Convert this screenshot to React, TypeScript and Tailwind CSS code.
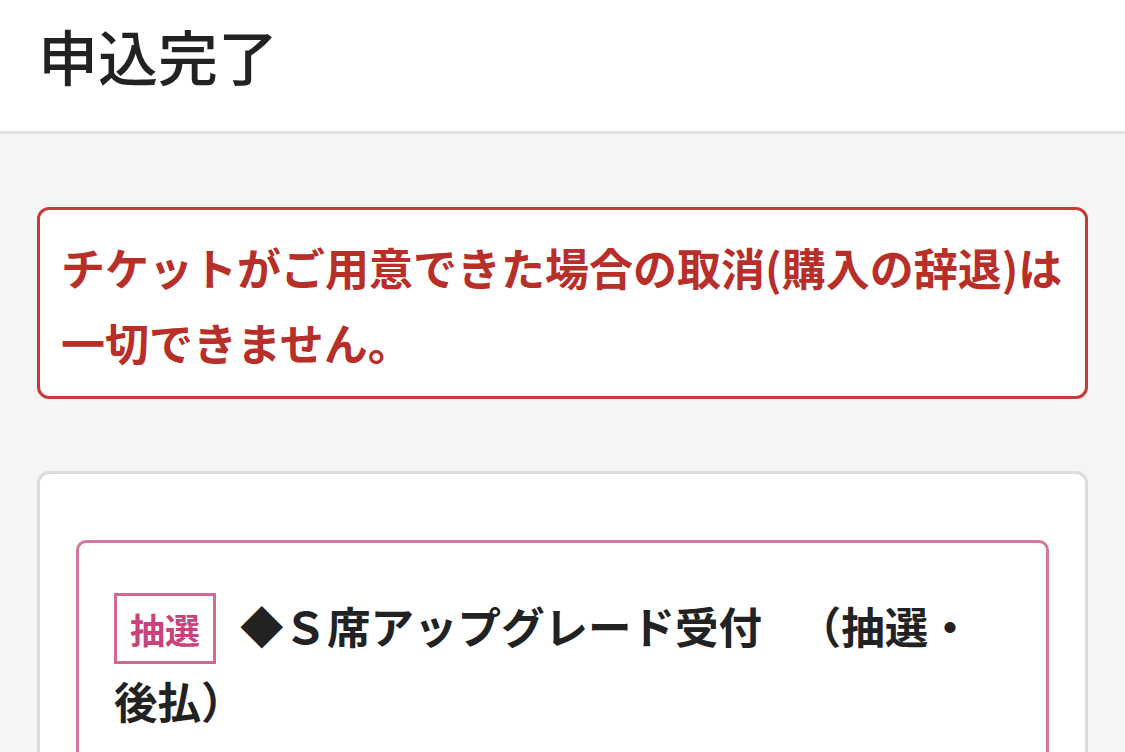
export default function App() {
  return (
    <div className="min-h-screen bg-[#f5f5f5] font-['Noto_Sans_CJK_JP','Noto_Sans',sans-serif]">
      <header className="h-[134px] bg-white border-b-[3px] border-[#e2e2e2] pl-[38px] pb-[22px] flex items-center">
        <h1 className="text-[60px] leading-none font-medium text-[#222]">申込完了</h1>
      </header>

      <main className="px-[37px] pt-[73px]">
        <div className="rounded-[12px] border-[3px] border-[#c63b35] bg-white pl-[21px] pr-[8px] pt-[20px] pb-[16px]">
          <p className="text-[44px] leading-[75px] font-bold text-[#b72f28]">
            チケットがご用意できた場合の取消(購入の辞退)は一切できません。
          </p>
        </div>

        <div className="mt-[72px] rounded-[12px] border-[3px] border-[#dcdcdc] bg-white px-[36px] pt-[66px]">
          <div className="min-h-[320px] rounded-[10px] border-[3px] border-[#d5789f] pl-[35px] pr-[40px] pt-[46px]">
            <p className="text-[43.5px] leading-[73px] font-bold text-[#222]">
              <span className="inline-block align-baseline mr-[24px] border-[3px] border-[#d06a98] px-[13px] text-[35px] leading-[65px] text-[#c9427a]">
                抽選
              </span>
              ◆Ｓ席アップグレード受付　<span className="ml-[14px]">（抽選・後払）</span>
            </p>
          </div>
        </div>
      </main>
    </div>
  );
}
